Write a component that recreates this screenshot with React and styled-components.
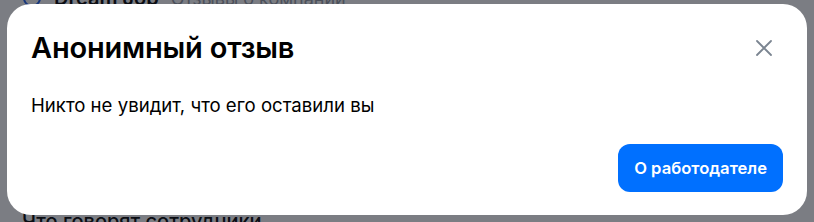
import React from "react";
import styled, { createGlobalStyle } from "styled-components";

const GlobalStyle = createGlobalStyle`
  html, body {
    margin: 0;
    padding: 0;
    background: #ffffff;
    font-family: Inter, "Noto Sans", sans-serif;
    overflow: hidden;
  }
`;

export default function App() {
  return (
    <>
      <GlobalStyle />
      <Page>
        <Header>
          <Logo viewBox="0 0 20 20">
            <circle cx="10" cy="10" r="8" fill="none" stroke="#2d6cf0" strokeWidth="2" />
          </Logo>
          <Brand>Dream Job</Brand>
          <Crumb>Отзывы о компании</Crumb>
        </Header>
        <SectionTitle>Что говорят сотрудники</SectionTitle>
      </Page>
      <Overlay>
        <Modal role="dialog">
          <ModalHead>
            <Title>Анонимный отзыв</Title>
            <CloseButton aria-label="Закрыть">
              <svg width="16" height="16" viewBox="0 0 16 16">
                <path d="M1 1L15 15M15 1L1 15" stroke="#7b8591" strokeWidth="1.8" strokeLinecap="round" />
              </svg>
            </CloseButton>
          </ModalHead>
          <Text>Никто не увидит, что его оставили вы</Text>
          <Footer>
            <Button>О работодателе</Button>
          </Footer>
        </Modal>
      </Overlay>
    </>
  );
}

const Page = styled.div`
  height: 222px;
  display: flex;
  flex-direction: column;
  justify-content: space-between;
  padding: 0 22px;
  box-sizing: border-box;
`;

const Header = styled.div`
  display: flex;
  align-items: center;
  gap: 12px;
  margin-top: -15px;
  height: 26px;
`;

const Logo = styled.svg`
  width: 20px;
  height: 20px;
`;

const Brand = styled.span`
  font-size: 20px;
  font-weight: 600;
  color: #111;
`;

const Crumb = styled.span`
  font-size: 18px;
  color: #9aa0a8;
`;

const SectionTitle = styled.div`
  font-size: 20px;
  line-height: 24px;
  font-weight: 500;
  color: #111;
  margin-bottom: -11px;
`;

const Overlay = styled.div`
  position: fixed;
  inset: 0;
  padding-bottom: 3px;
  background: rgba(5, 10, 20, 0.53);
  display: flex;
  align-items: center;
  justify-content: center;
`;

const Modal = styled.div`
  width: 800px;
  box-sizing: border-box;
  background: #fff;
  border-radius: 24px;
  padding: 26px 24px 23px 24px;
  display: flex;
  flex-direction: column;
`;

const ModalHead = styled.div`
  display: flex;
  justify-content: space-between;
  align-items: center;
`;

const Title = styled.h2`
  margin: 0;
  font-size: 29px;
  line-height: 36px;
  font-weight: 600;
  color: #000;
  letter-spacing: -0.2px;
`;

const CloseButton = styled.button`
  border: 0;
  background: none;
  padding: 0;
  margin-right: 7px;
  width: 24px;
  height: 24px;
  display: flex;
  align-items: center;
  justify-content: center;
  cursor: pointer;
`;

const Text = styled.p`
  margin: 27px 0 0;
  font-size: 18.6px;
  line-height: 24px;
  color: #000;
`;

const Footer = styled.div`
  display: flex;
  justify-content: flex-end;
  margin-top: 27px;
`;

const Button = styled.button`
  height: 48px;
  padding: 0 16px;
  border: 0;
  border-radius: 12px;
  background: #0070ff;
  color: #fff;
  font-family: Inter, "Noto Sans", sans-serif;
  font-size: 16.6px;
  font-weight: 600;
  cursor: pointer;
`;
